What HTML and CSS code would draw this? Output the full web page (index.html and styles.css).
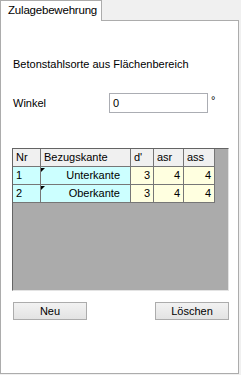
FILE: index.html
```html
<!DOCTYPE html>
<html>
<head>
<meta charset="utf-8">
<link rel="stylesheet" href="styles.css">
</head>
<body>
<div class="window">
  <div class="tabs">
    <div class="tab">Zulagebewehrung</div>
    <div class="tabfill"></div>
  </div>
  <div class="panel">
    <div class="title">Betonstahlsorte aus Flächenbereich</div>
    <div class="row">
      <span class="label">Winkel</span>
      <div class="input">0</div>
      <span class="deg">°</span>
    </div>
    <div class="grid">
      <div class="cells">
        <div class="hc">Nr</div>
        <div class="hc">Bezugskante</div>
        <div class="hc">d'</div>
        <div class="hc">asr</div>
        <div class="hc">ass</div>

        <div class="c cyan">1</div>
        <div class="c cyan combo">Unterkante</div>
        <div class="c yel num">3</div>
        <div class="c yel num">4</div>
        <div class="c yel num">4</div>

        <div class="c cyan">2</div>
        <div class="c cyan combo">Oberkante</div>
        <div class="c yel num">3</div>
        <div class="c yel num">4</div>
        <div class="c yel num">4</div>
      </div>
    </div>
    <div class="buttons">
      <div class="btn">Neu</div>
      <div class="btn">Löschen</div>
    </div>
  </div>
</div>
</body>
</html>
```

FILE: styles.css
```css
html, body {
  margin: 0;
  padding: 0;
  background: #f0f0f0;
}
body {
  font-family: "Liberation Sans", Arial, sans-serif;
  font-size: 11px;
  line-height: 13px;
  color: #000;
}
.window {
  width: 239px;
}
.tabs {
  display: flex;
  height: 21px;
}
.tab {
  box-sizing: border-box;
  width: 102px;
  height: 21px;
  background: #fff;
  border: 1px solid #acacac;
  border-bottom: none;
  padding: 3px 0 0 7px;
  font-size: 11.5px;
  letter-spacing: -0.2px;
}
.tabfill {
  flex: 1;
  border-bottom: 1px solid #acacac;
}
.panel {
  box-sizing: border-box;
  height: 353px;
  background: #fff;
  border: 1px solid #acacac;
  border-top: none;
  display: flex;
  flex-direction: column;
}
.title {
  margin: 37px 0 0 12px;
}
.row {
  display: flex;
  align-items: center;
  margin: 22px 0 0 12px;
  height: 20px;
}
.label {
  width: 96px;
}
.input {
  box-sizing: border-box;
  width: 99px;
  height: 20px;
  border: 1px solid #abadb3;
  padding: 3px 0 0 3px;
  background: #fff;
}
.deg {
  align-self: flex-start;
  margin: 1px 0 0 3px;
}
.grid {
  box-sizing: border-box;
  margin: 35px 0 0 11px;
  width: 217px;
  height: 143px;
  background: #ababab;
  border-left: 1px solid #646464;
  border-top: 1px solid #646464;
  border-right: 1px solid #e3e3e3;
  border-bottom: 1px solid #e3e3e3;
}
.cells {
  display: grid;
  grid-template-columns: 28px 90px 23px 30px 31px;
  grid-auto-rows: 18px;
  width: 202px;
}
.hc, .c {
  box-sizing: border-box;
  border-right: 1px solid #767676;
  border-bottom: 1px solid #767676;
  padding: 2px 0 0 3px;
  white-space: nowrap;
  position: relative;
}
.hc {
  background: #f0f0f0;
}
.cyan {
  background: #ccffff;
}
.yel {
  background: #ffffe0;
}
.num {
  text-align: right;
  padding: 2px 3px 0 0;
}
.combo {
  text-align: right;
  padding: 2px 10px 0 0;
}
.combo::before {
  content: "";
  position: absolute;
  left: 0;
  top: 1px;
  width: 0;
  height: 0;
  border-top: 4px solid #000;
  border-right: 4px solid transparent;
}
.buttons {
  display: flex;
  justify-content: space-between;
  margin: 11px 0 0 12px;
  width: 216px;
}
.btn {
  box-sizing: border-box;
  width: 74px;
  height: 18px;
  border: 1px solid #acacac;
  background: linear-gradient(#f2f2f2, #e3e3e3);
  text-align: center;
  padding-top: 2px;
}
```
